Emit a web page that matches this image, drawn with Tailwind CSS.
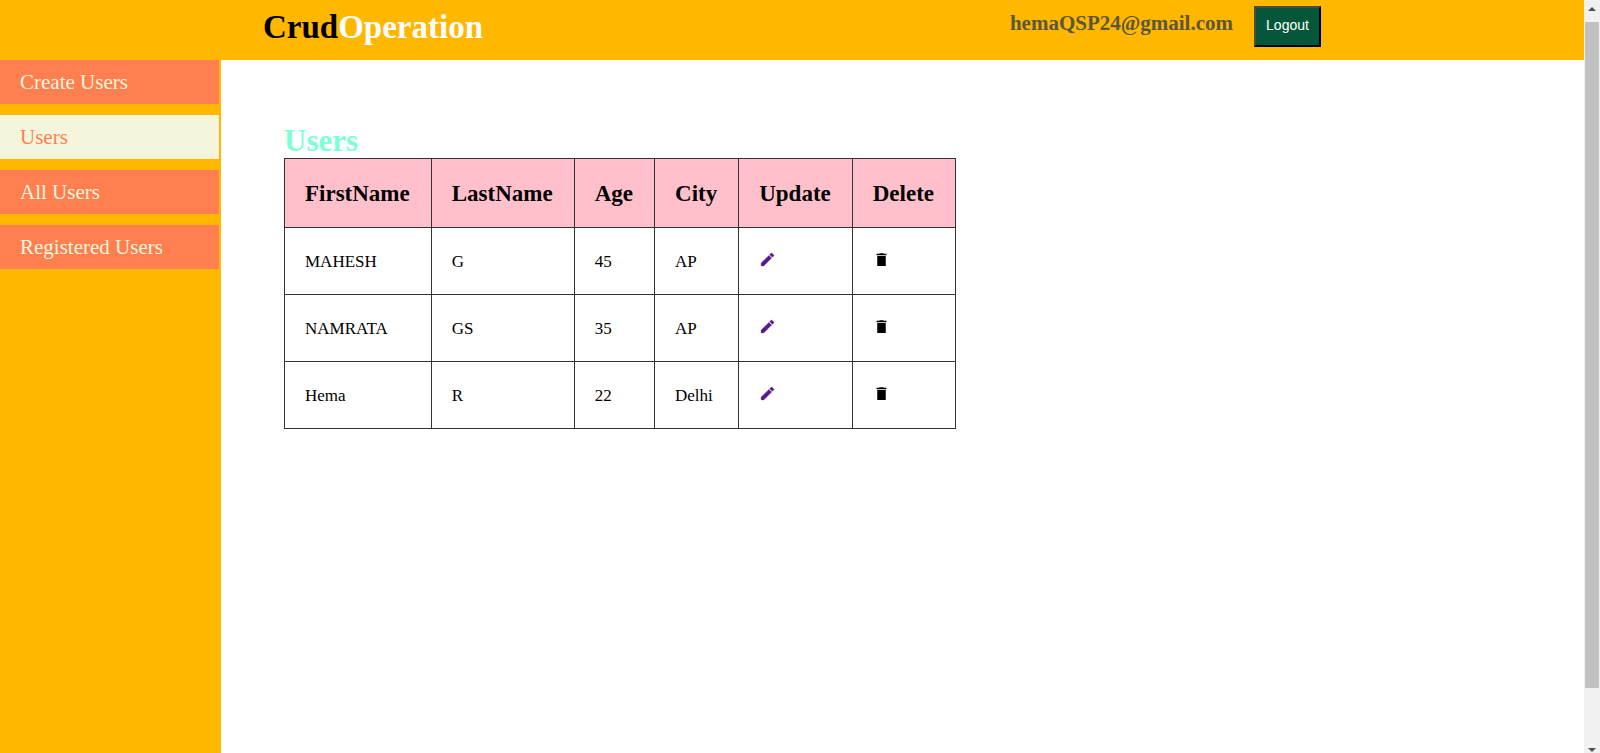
<!DOCTYPE html>
<html lang="en">
<head>
<meta charset="utf-8">
<title>CrudOperation</title>
<script src="https://cdn.jsdelivr.net/npm/@tailwindcss/browser@4"></script>
</head>
<body class="flex h-screen overflow-hidden bg-white font-['Liberation_Serif',serif] text-black">
<svg class="hidden">
  <symbol id="edit" viewBox="0 0 24 24"><path d="M3 17.460v3.040c0 .28.22.5.5.5h3.040c.13 0 .26-.05.35-.15L17.810 9.940l-3.750-3.750L3.150 17.100c-.1.1-.15.22-.15.36zM20.710 7.040a.996.996 0 0 0 0-1.410l-2.340-2.340a.996.996 0 0 0-1.410 0l-1.830 1.830 3.750 3.750 1.830-1.830z" stroke="currentColor" stroke-width=".5"/></symbol>
  <symbol id="trash" viewBox="0 0 24 24"><path d="M6 21h12V7H6v14zM19 4h-3.500l-1-1h-5l-1 1H5v2h14V4z"/></symbol>
</svg>
<div class="flex min-w-0 flex-1 flex-col">
  <header class="flex h-[60px] shrink-0 items-start bg-[#ffb700] pr-[263px] pl-[263px]">
    <h1 class="mt-2 text-[33px] leading-[38px] font-bold">Crud<span class="text-white">Operation</span></h1>
    <p class="mt-[11px] ml-auto text-[21px] leading-6 font-bold text-[#5d5638]">hemaQSP24@gmail.com</p>
    <button type="button" class="mt-1.5 ml-[21px] h-[41px] w-[67px] border-2 border-t-[#4d4d3d] border-r-black border-b-black border-l-[#4d4d3d] bg-[#06573a] pb-1 font-['Liberation_Sans',sans-serif] text-sm text-white">Logout</button>
  </header>
  <div class="flex min-h-0 flex-1">
    <nav class="flex w-[221px] shrink-0 flex-col gap-[11px] bg-[#ffb700] pr-0.5 text-[21px] leading-6 text-[#f5f5dc]">
      <a href="#" class="bg-[#ff7f50] py-2.5 pl-5">Create Users</a>
      <a href="#" class="bg-[#f5f5dc] py-2.5 pl-5 text-[#ff7f50]">Users</a>
      <a href="#" class="bg-[#ff7f50] py-2.5 pl-5">All Users</a>
      <a href="#" class="bg-[#ff7f50] py-2.5 pl-5">Registered Users</a>
    </nav>
    <main class="flex-1 pt-[63px] pl-[63px]">
      <h2 class="text-[31px] leading-[35px] font-bold text-[#7fffd4]">Users</h2>
      <table class="border-collapse border border-[#333] text-left text-[17px] leading-5 [&_td]:border [&_td]:border-[#333] [&_td]:pt-0.5 [&_td]:pr-[21px] [&_td]:pl-5 [&_th]:border [&_th]:border-[#333] [&_th]:pt-0.5 [&_th]:pr-[21px] [&_th]:pl-5">
        <thead>
          <tr class="h-[69px] bg-[#ffc0cb] text-[23px] leading-7"><th>FirstName</th><th>LastName</th><th>Age</th><th>City</th><th>Update</th><th>Delete</th></tr>
        </thead>
        <tbody>
          <tr class="h-[67px]"><td>MAHESH</td><td>G</td><td>45</td><td>AP</td>
            <td><a href="#" aria-label="Edit" class="inline-block text-[#551a8b]"><svg class="size-[17px] fill-current"><use href="#edit"/></svg></a></td>
            <td><a href="#" aria-label="Delete" class="inline-block"><svg class="size-[17px] fill-current"><use href="#trash"/></svg></a></td></tr>
          <tr class="h-[67px]"><td>NAMRATA</td><td>GS</td><td>35</td><td>AP</td>
            <td><a href="#" aria-label="Edit" class="inline-block text-[#551a8b]"><svg class="size-[17px] fill-current"><use href="#edit"/></svg></a></td>
            <td><a href="#" aria-label="Delete" class="inline-block"><svg class="size-[17px] fill-current"><use href="#trash"/></svg></a></td></tr>
          <tr class="h-[67px]"><td>Hema</td><td>R</td><td>22</td><td>Delhi</td>
            <td><a href="#" aria-label="Edit" class="inline-block text-[#551a8b]"><svg class="size-[17px] fill-current"><use href="#edit"/></svg></a></td>
            <td><a href="#" aria-label="Delete" class="inline-block"><svg class="size-[17px] fill-current"><use href="#trash"/></svg></a></td></tr>
        </tbody>
      </table>
    </main>
  </div>
</div>
<div class="flex w-4 shrink-0 flex-col items-center bg-[#f1f1f1]" aria-hidden="true">
  <svg class="h-[22px] w-2 shrink-0 fill-[#505050]" viewBox="0 0 8 22"><path d="M0 11 4 7l4 4z"/></svg>
  <div class="w-[14px] flex-[666] bg-[#c1c1c1]"></div>
  <div class="flex-[51]"></div>
  <svg class="h-[14px] w-2 shrink-0 fill-[#505050]" viewBox="0 0 8 14"><path d="M0 9h8l-4 4z"/></svg>
</div>
</body>
</html>
